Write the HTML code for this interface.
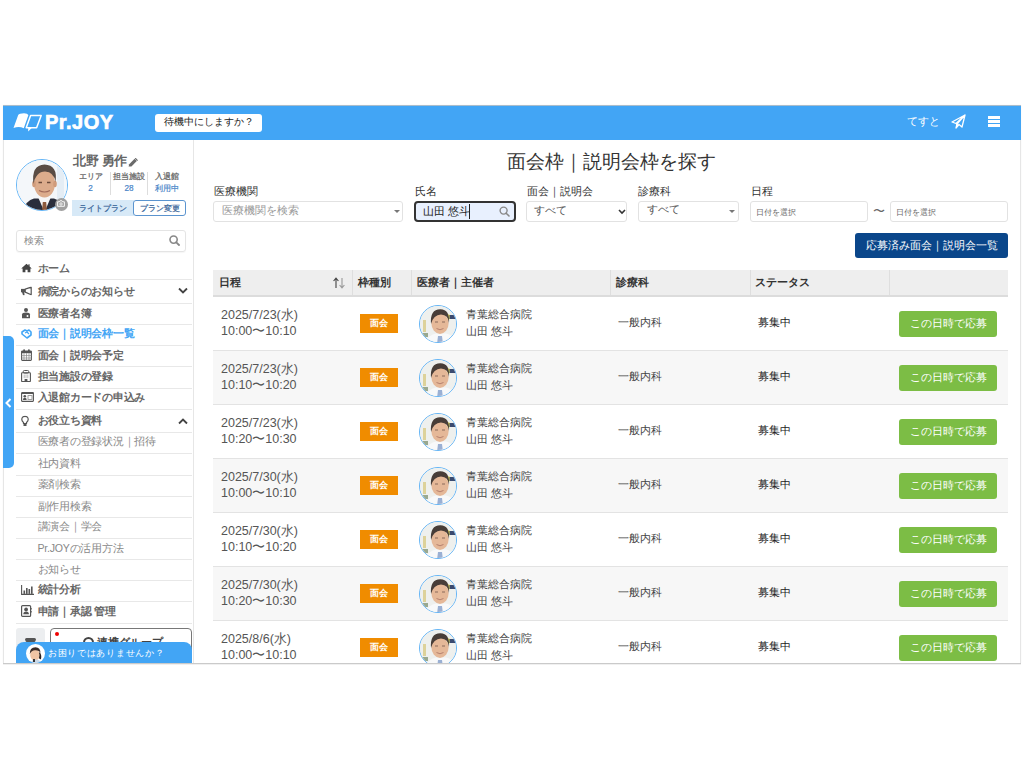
<!DOCTYPE html><html><head><meta charset="utf-8"><style>
*{box-sizing:border-box;margin:0;padding:0}
html,body{width:1024px;height:768px;background:#fff;overflow:hidden}
body{position:relative;font-family:"Liberation Sans",sans-serif;color:#333}
.a{position:absolute;white-space:nowrap}
#app{position:absolute;left:3px;top:105px;width:1018px;height:558px;background:#fff;border-left:1px solid #e6e6e6;border-right:1px solid #e6e6e6;box-shadow:0 0 1px rgba(0,0,0,.08)}
#hdr{position:absolute;left:3px;top:105px;width:1018px;height:35px;background:#42a5f5;border-top:1px solid #a9bccb}
.mi{position:absolute;left:16px;width:176px;border-bottom:1px solid #e8e8e8;font-size:10.6px;letter-spacing:-0.25px;font-weight:bold;color:#666}
.mi span{position:absolute;left:21.5px;line-height:14px;white-space:nowrap}
.mi svg{position:absolute;left:5px;top:50%;transform:translateY(-50%)}
.mi.sub{font-weight:normal;color:#888}

.lbl{position:absolute;font-size:10.5px;color:#333;top:185px;white-space:nowrap}
.inp{position:absolute;top:201px;height:21px;border:1px solid #e2e2e2;border-radius:3px;background:#fff}
.th{position:absolute;top:269px;height:26px;font-size:10.8px;font-weight:bold;color:#333;line-height:26px;white-space:nowrap}
.row{position:absolute;left:213px;width:795px;height:54px;border-bottom:1px solid #e3e3e3}
.row.alt{background:#f7f7f7}
.dt{position:absolute;left:8px;top:10.2px;font-size:12.5px;line-height:16.3px;color:#555;white-space:nowrap}
.badge{position:absolute;left:147px;top:17px;width:38px;height:19px;background:#f08c00;color:#fff;font-size:9px;font-weight:bold;text-align:center;line-height:19px}
.av{position:absolute;left:206px;top:8px;width:38px;height:38px;border-radius:50%;border:1px solid #64b5f6;overflow:hidden;background:#eef2f4}
.hosp{position:absolute;left:253px;top:9px;font-size:10.8px;line-height:16.5px;color:#444;white-space:nowrap}
.dept{position:absolute;left:405px;top:19px;font-size:10.8px;color:#444;white-space:nowrap}
.stat{position:absolute;left:545px;top:19px;font-size:10.8px;color:#222;white-space:nowrap}
.btn{position:absolute;left:686px;top:14px;width:98px;height:26px;border-radius:3px;background:#7cbd45;color:#fff;font-size:10.8px;text-align:center;line-height:24px;white-space:nowrap}
</style></head><body>
<div id="app"></div><div id="hdr"></div>
<svg class="a" style="left:10px;top:108px" width="36" height="30" viewBox="0 0 36 30">
<path d="M3.5 20 L8.2 7 Q9.2 5.2 14 5.2 Q17.6 5.4 18.4 7 L13.8 20.2 Q9 17.8 3.5 20 Z" fill="#fff"/>
<path d="M20.6 7.6 L31.2 7.6 L26.6 19.8 L16.2 19.8 Z" fill="none" stroke="#fff" stroke-width="1.5" stroke-linejoin="round"/>
<path d="M18.2 19.5 L18.2 23.5 L22.2 19.5 Z" fill="#fff"/>
</svg>
<div class="a" style="left:45px;top:110px;font-size:20px;font-weight:bold;color:#fff;line-height:24px;letter-spacing:0.5px;-webkit-text-stroke:0.7px #fff">Pr.JOY</div>
<div class="a" style="left:155px;top:114px;width:107px;height:18px;background:#fff;border-radius:3px;font-size:9.5px;line-height:16px;text-align:center;color:#222">待機中にしますか？</div>
<div class="a" style="left:907px;top:114px;font-size:10.8px;line-height:14px;color:#fff">てすと</div>
<svg class="a" style="left:951px;top:114px" width="15" height="15" viewBox="0 0 15 15">
<path d="M14 1 L1 8 L5 9.5 L14 1 L6 10 L5 14 L8 10.5 L11 13 Z" fill="none" stroke="#fff" stroke-width="1.3" stroke-linejoin="round"/>
<path d="M5 9.5 L5 14 L7.5 10.5 Z" fill="#fff"/></svg>
<div class="a" style="left:988px;top:116px;width:12px;height:2.5px;background:#fff"></div>
<div class="a" style="left:988px;top:120px;width:12px;height:2.5px;background:#fff"></div>
<div class="a" style="left:988px;top:124px;width:12px;height:2.5px;background:#fff"></div>
<div class="a" style="left:193px;top:140px;width:1px;height:523px;background:#e6e6e6"></div>
<div class="a" style="left:16px;top:159px;width:52px;height:52px;border-radius:50%;overflow:hidden;border:1px solid #64b5f6"><svg width="52" height="52" viewBox="0 0 52 52">
<rect width="52" height="52" fill="#f4f7fa"/>
<rect x="40" y="2" width="7" height="42" fill="#e4edf5"/>
<path d="M6 52 Q8 41 17 38.5 L37 38.5 Q45 41 48 52 Z" fill="#2a2e3c"/>
<path d="M21 37 L27.5 52 L34 37 Z" fill="#f6f6f6"/>
<path d="M25.8 42 L29.2 42 L30 52 L25 52 Z" fill="#8d5a3c"/>
<ellipse cx="27.5" cy="23.5" rx="10.5" ry="14" fill="#dcac8c"/>
<ellipse cx="17" cy="24" rx="1.8" ry="3.2" fill="#d09c7c"/>
<ellipse cx="38" cy="24" rx="1.8" ry="3.2" fill="#d09c7c"/>
<path d="M16.5 24 Q14 5 27.5 4.5 Q41 5 38.5 22 Q37 12 28 11.5 Q19 11.5 16.5 24 Z" fill="#5a4c44"/>
<path d="M21.5 22.5 H25 M30 22.5 H33.5" stroke="#6a4a3a" stroke-width="1.3"/>
<path d="M22 30.5 Q27.5 33.5 33 30.5" stroke="#a06a5a" stroke-width="1.1" fill="none"/>
</svg></div>
<div class="a" style="left:54.5px;top:197.5px;width:13px;height:13px;border-radius:50%;background:#a0a0a0"></div>
<svg class="a" style="left:57px;top:200px" width="8" height="7" viewBox="0 0 8 7"><path d="M0.6 1.8 H2.3 L3 0.8 H5 L5.7 1.8 H7.4 V6.3 H0.6 Z" fill="none" stroke="#fff" stroke-width="0.9"/><circle cx="4" cy="4" r="1.2" fill="none" stroke="#fff" stroke-width="0.8"/></svg>
<div class="a" style="left:73px;top:153px;font-size:12.6px;letter-spacing:-0.3px;font-weight:bold;color:#666;line-height:16px">北野 勇作</div>
<svg class="a" style="left:128px;top:157.5px" width="10" height="9" viewBox="0 0 10 9"><path d="M0.6 8.6 L1.2 6.2 L6.6 0.8 L8.8 3 L3.4 8.4 Z" fill="#6a6a6a"/><path d="M7.2 0.2 L9.6 2.6" stroke="#6a6a6a" stroke-width="1.2"/></svg>
<div class="a" style="left:60.5px;width:60px;top:171px;text-align:center;font-size:8px;line-height:11px;color:#666;-webkit-text-stroke:0.25px #666">エリア</div>
<div class="a" style="left:60.5px;width:60px;top:183px;text-align:center;font-size:8.2px;line-height:11px;color:#4a86c8;-webkit-text-stroke:0.2px #4a86c8">2</div>
<div class="a" style="left:99px;width:60px;top:171px;text-align:center;font-size:8px;line-height:11px;color:#666;-webkit-text-stroke:0.25px #666">担当施設</div>
<div class="a" style="left:99px;width:60px;top:183px;text-align:center;font-size:8.2px;line-height:11px;color:#4a86c8;-webkit-text-stroke:0.2px #4a86c8">28</div>
<div class="a" style="left:137px;width:60px;top:171px;text-align:center;font-size:8px;line-height:11px;color:#666;-webkit-text-stroke:0.25px #666">入退館</div>
<div class="a" style="left:137px;width:60px;top:183px;text-align:center;font-size:8.2px;line-height:11px;color:#4a86c8;-webkit-text-stroke:0.2px #4a86c8">利用中</div>
<div class="a" style="left:110px;top:172px;width:1px;height:23px;background:#ddd"></div>
<div class="a" style="left:147px;top:172px;width:1px;height:23px;background:#ddd"></div>
<div class="a" style="left:72px;top:200px;width:62px;height:16px;background:#d7e9f7;font-size:8.4px;line-height:16px;text-align:center;color:#3f6a9c;-webkit-text-stroke:0.25px #3f6a9c">ライトプラン</div>
<div class="a" style="left:133px;top:200px;width:53px;height:16px;border:1px solid #5b94cf;border-radius:3px;background:#fff;font-size:8.4px;line-height:14px;text-align:center;color:#3f6a9c;-webkit-text-stroke:0.25px #3f6a9c">プラン変更</div>
<div class="a" style="left:16px;top:230px;width:170px;height:22px;border:1px solid #e4e4e4;border-radius:3px;box-shadow:0 1px 1px rgba(0,0,0,.04)"></div>
<div class="a" style="left:24px;top:234px;font-size:10px;line-height:13px;color:#888">検索</div>
<svg class="a" style="left:169px;top:235px" width="11" height="11" viewBox="0 0 11 11"><circle cx="4.6" cy="4.6" r="3.6" fill="none" stroke="#888" stroke-width="1.6"/><path d="M7.3 7.3 L10 10" stroke="#888" stroke-width="1.8" stroke-linecap="round"/></svg>
<div class="mi" style="top:255px;height:25px"><svg style="top:13px" width="11" height="9" viewBox="0 0 11 9"><path d="M5.5 0.3 L0.2 5 L1.6 5 L1.6 9 L4.4 9 L4.4 6.2 L6.6 6.2 L6.6 9 L9.4 9 L9.4 5 L10.8 5 L8.6 3 L8.6 0.8 L7.4 0.8 L7.4 2 Z" fill="#444"/></svg><span style="top:5.7px">ホーム</span></div>
<div class="mi" style="top:279px;height:25px"><svg style="top:12px" width="11" height="9" viewBox="0 0 11 9"><rect x="0" y="2.4" width="4.2" height="3.4" fill="#555"/><path d="M4.2 2.6 L10.2 0.6 L10.2 8.2 L4.2 5.6 Z" fill="none" stroke="#555" stroke-width="1.2" stroke-linejoin="round"/><path d="M1 5.6 L2 8.8 L3.6 8.8 L3.2 5.6 Z" fill="#555"/></svg><span style="top:4.7px">病院からのお知らせ</span><svg style="left:161.5px;top:12px" width="10" height="7" viewBox="0 0 10 7"><path d="M1 1 L5 5 L9 1" fill="none" stroke="#444" stroke-width="1.8"/></svg></div>
<div class="mi" style="top:303px;height:22px"><svg style="top:9.9px" width="10" height="11" viewBox="0 0 10 11"><circle cx="5" cy="2.5" r="2" fill="#555"/><path d="M1 11 L1 7 Q1 5 5 5 Q9 5 9 7 L9 11 Z" fill="#555"/><circle cx="6.5" cy="8.5" r="1" fill="#fff"/></svg><span style="top:2.6px">医療者名簿</span></div>
<div class="mi" style="top:324px;height:22px"><svg style="top:9.6px" width="11" height="10" viewBox="0 0 11 10"><path d="M1 3 L4 1 L6 2 L8 1 L10 3 L10 6 L6 9 L1 5 Z" fill="none" stroke="#42a5f5" stroke-width="1.6" stroke-linejoin="round"/><path d="M4 4 L6 3 L8 5" fill="none" stroke="#42a5f5" stroke-width="1.2"/></svg><span style="color:#42a5f5;top:2.3px">面会｜説明会枠一覧</span></div>
<div class="mi" style="top:345px;height:22px"><svg style="top:10.15px" width="11" height="12" viewBox="0 0 11 12"><rect x="0.6" y="2" width="9.8" height="9.4" rx="0.8" fill="none" stroke="#555" stroke-width="1.1"/><rect x="0.6" y="2" width="9.8" height="2.2" fill="#555"/><rect x="2.2" y="0.2" width="1.8" height="2.8" rx="0.9" fill="#555"/><rect x="7" y="0.2" width="1.8" height="2.8" rx="0.9" fill="#555"/><path d="M3 4.2 V11 M5.5 4.2 V11 M8 4.2 V11 M0.6 6.6 H10.4 M0.6 9 H10.4" stroke="#888" stroke-width="0.7"/></svg><span style="top:2.85px">面会｜説明会予定</span></div>
<div class="mi" style="top:366px;height:23px"><svg style="top:9.8px" width="10" height="12" viewBox="0 0 10 12"><rect x="2.2" y="0.5" width="5.6" height="2.6" rx="1.2" fill="none" stroke="#555" stroke-width="1"/><rect x="0.6" y="2.8" width="8.8" height="8.7" rx="0.6" fill="none" stroke="#555" stroke-width="1.1"/><path d="M3.2 4.5 V8.2 M5 4.5 V8.2 M6.8 4.5 V8.2" stroke="#999" stroke-width="0.7"/><rect x="3.6" y="9" width="2.8" height="2.5" fill="#555"/></svg><span style="top:2.5px">担当施設の登録</span></div>
<div class="mi" style="top:388px;height:22px"><svg style="top:8.9px" width="13" height="10" viewBox="0 0 13 10"><rect x="0.6" y="0.6" width="11.8" height="8.8" rx="0.6" fill="none" stroke="#555" stroke-width="1.1"/><rect x="0.6" y="0.6" width="11.8" height="1.4" fill="#555"/><circle cx="3.8" cy="4.2" r="1.3" fill="#555"/><path d="M1.9 8 Q1.9 5.8 3.8 5.8 Q5.7 5.8 5.7 8 Z" fill="#555"/><rect x="7" y="3.6" width="4" height="3.8" fill="none" stroke="#888" stroke-width="0.8"/></svg><span style="top:1.6px">入退館カードの申込み</span></div>
<div class="mi" style="top:409px;height:24px"><svg style="top:11.6px" width="8" height="11" viewBox="0 0 8 11"><path d="M4 0.8 Q7.2 0.8 7.2 4 Q7.2 5.5 5.5 7 L5.5 8 L2.5 8 L2.5 7 Q0.8 5.5 0.8 4 Q0.8 0.8 4 0.8 Z" fill="none" stroke="#555" stroke-width="1.2"/><rect x="2.5" y="8.5" width="3" height="2" fill="#555"/></svg><span style="top:4.3px">お役立ち資料</span><svg style="left:161.5px;top:11.6px" width="10" height="7" viewBox="0 0 10 7"><path d="M1 6 L5 2 L9 6" fill="none" stroke="#444" stroke-width="1.8"/></svg></div>
<div class="mi sub" style="top:432px;height:22px"><span style="top:2.4px">医療者の登録状況｜招待</span></div>
<div class="mi sub" style="top:453px;height:23px"><span style="top:3.0px">社内資料</span></div>
<div class="mi sub" style="top:475px;height:22px"><span style="top:1.8px">薬剤検索</span></div>
<div class="mi sub" style="top:496px;height:22px"><span style="top:2.5px">副作用検索</span></div>
<div class="mi sub" style="top:517px;height:22px"><span style="top:2.0px">講演会｜学会</span></div>
<div class="mi sub" style="top:538px;height:22px"><span style="top:2.5px">Pr.JOYの活用方法</span></div>
<div class="mi sub" style="top:559px;height:22px"><span style="top:2.6px">お知らせ</span></div>
<div class="mi" style="top:580px;height:22px"><svg style="top:9.75px" width="13" height="10" viewBox="0 0 13 10"><path d="M0.6 0 V9.4 H13" fill="none" stroke="#555" stroke-width="1.1"/><rect x="2.5" y="5.5" width="1.6" height="3.4" fill="#555"/><rect x="5" y="3" width="1.6" height="5.9" fill="#555"/><rect x="7.5" y="4" width="1.6" height="4.9" fill="#555"/><rect x="10" y="1.5" width="1.6" height="7.4" fill="#555"/></svg><span style="top:2.45px">統計分析</span></div>
<div class="mi" style="top:601px;height:23px"><svg style="top:10.1px" width="11" height="12" viewBox="0 0 11 12"><rect x="0.6" y="0.6" width="9" height="10.8" rx="1" fill="none" stroke="#555" stroke-width="1.2"/><path d="M10.2 3 V4.5 M10.2 6 V7.5" stroke="#555" stroke-width="1"/><circle cx="5.1" cy="4.4" r="1.9" fill="#555"/><path d="M2.3 9.2 Q2.3 6.6 5.1 6.6 Q7.9 6.6 7.9 9.2 Z" fill="#555"/></svg><span style="top:2.8px">申請｜承認 管理</span></div>
<div class="a" style="left:3px;top:336px;width:11px;height:132px;background:#42a5f5;border-radius:0 5px 5px 0"></div>
<svg class="a" style="left:5px;top:398px" width="7" height="10" viewBox="0 0 7 10"><path d="M5.5 1 L1.5 5 L5.5 9" fill="none" stroke="#fff" stroke-width="2"/></svg>
<div class="a" style="left:16px;top:628px;width:29px;height:40px;background:#eceef0;border-radius:3px"></div>
<svg class="a" style="left:25px;top:637.5px" width="11" height="5" viewBox="0 0 11 5"><path d="M1.5 0 H9.5 Q11 0 11 1.5 Q11 3 8.5 5 H2.5 Q0 3 0 1.5 Q0 0 1.5 0 Z" fill="#555"/></svg>
<div class="a" style="left:50px;top:628px;width:142px;height:40px;border:1px solid #777;border-radius:4px;background:#fff"></div>
<div class="a" style="left:55px;top:632px;width:4px;height:4px;border-radius:50%;background:#e00"></div>
<div class="a" style="left:83px;top:637px;width:11px;height:11px;border-radius:50%;border:2.5px solid #444"></div>
<div class="a" style="left:97px;top:634px;font-size:11px;font-weight:bold;color:#444;line-height:16px">連携グループ</div>
<div class="a" style="left:16px;top:642px;width:176px;height:21px;background:#42a5f5;border-radius:8px 8px 0 0"></div>
<div class="a" style="left:26px;top:644px;width:19px;height:19px;border-radius:50%;background:#fff;overflow:hidden"><svg width="19" height="19" viewBox="0 0 19 19"><ellipse cx="9" cy="11" rx="4.8" ry="5.8" fill="#efc4a4"/><path d="M3.8 10 Q3.5 3.5 9.5 3.2 Q14.5 3.5 14.5 9 Q13 6 9 6.2 Q5.5 6.5 3.8 10 Z" fill="#3a2c28"/><path d="M13.5 8 Q16 11 15 15 Q14 16 13 14 Q14 11 13 9 Z" fill="#2a201e"/><path d="M4 19 Q6 15.5 10 15.5 Q14 15.5 15.5 19 Z" fill="#c8d8e8"/><rect x="7" y="15" width="2" height="3" fill="#333"/></svg></div>
<div class="a" style="left:48px;top:646px;font-size:9.4px;letter-spacing:0.7px;line-height:13px;color:#fff">お困りではありませんか？</div>
<div class="a" style="left:507px;top:151px;font-size:18.8px;line-height:22px;color:#333">面会枠｜説明会枠を探す</div>
<div class="lbl" style="left:214px">医療機関</div>
<div class="lbl" style="left:415px">氏名</div>
<div class="lbl" style="left:527px">面会｜説明会</div>
<div class="lbl" style="left:638px">診療科</div>
<div class="lbl" style="left:751px">日程</div>
<div class="inp" style="left:213px;width:190px"></div>
<div class="a" style="left:222px;top:204px;font-size:10.8px;line-height:13px;color:#999">医療機関を検索</div>
<div class="a" style="left:394px;top:210px;width:0;height:0;border-left:3px solid transparent;border-right:3px solid transparent;border-top:3px solid #777"></div>
<div class="a" style="left:414px;top:201px;width:102px;height:21px;border:2px solid #333;border-radius:4px;background:#e8f0fe"></div>
<div class="a" style="left:423px;top:205px;font-size:10.8px;line-height:13px;color:#222">山田 悠斗</div>
<div class="a" style="left:469px;top:204px;width:1px;height:15px;background:#222"></div>
<svg class="a" style="left:499px;top:206px" width="11" height="11" viewBox="0 0 11 11"><circle cx="4.6" cy="4.6" r="3.5" fill="none" stroke="#888" stroke-width="1.4"/><path d="M7.2 7.2 L10 10" stroke="#888" stroke-width="1.6" stroke-linecap="round"/></svg>
<div class="inp" style="left:526px;width:101px"></div>
<div class="a" style="left:534px;top:203px;font-size:11px;line-height:14px;color:#555">すべて</div>
<svg class="a" style="left:618px;top:209px" width="8" height="6" viewBox="0 0 8 6"><path d="M1 1 L4 4 L7 1" fill="none" stroke="#333" stroke-width="1.6"/></svg>
<div class="inp" style="left:638px;width:101px"></div>
<div class="a" style="left:647px;top:202px;font-size:11px;line-height:14px;color:#555">すべて</div>
<div class="a" style="left:729px;top:210px;width:0;height:0;border-left:3px solid transparent;border-right:3px solid transparent;border-top:3px solid #777"></div>
<div class="inp" style="left:750px;width:118px"></div>
<div class="a" style="left:756px;top:208px;font-size:7.8px;line-height:10px;color:#666">日付を選択</div>
<div class="a" style="left:873px;top:204px;font-size:12px;line-height:14px;color:#666">〜</div>
<div class="inp" style="left:890px;width:118px"></div>
<div class="a" style="left:896px;top:208px;font-size:7.8px;line-height:10px;color:#666">日付を選択</div>
<div class="a" style="left:855px;top:233px;width:153px;height:25px;background:#0a468a;border-radius:3px;color:#fff;font-size:10.8px;line-height:25px;text-align:center">応募済み面会｜説明会一覧</div>
<div class="a" style="left:213px;top:270px;width:795px;height:27px;background:#eeeeee;border-bottom:2px solid #dcdcdc"></div>
<div class="a" style="left:352px;top:270px;width:1px;height:25px;background:#dedede"></div>
<div class="a" style="left:411px;top:270px;width:1px;height:25px;background:#dedede"></div>
<div class="a" style="left:610px;top:270px;width:1px;height:25px;background:#dedede"></div>
<div class="a" style="left:750px;top:270px;width:1px;height:25px;background:#dedede"></div>
<div class="a" style="left:889px;top:270px;width:1px;height:25px;background:#dedede"></div>
<div class="th" style="left:219px">日程</div>
<svg class="a" style="left:333px;top:277px" width="12" height="12" viewBox="0 0 12 12"><path d="M3 11 V1.5 M0.6 4 L3 1.2 L5.4 4" fill="none" stroke="#444" stroke-width="1.1"/><path d="M9 1 V10.5 M6.6 8 L9 10.8 L11.4 8" fill="none" stroke="#999" stroke-width="1.1"/></svg>
<div class="th" style="left:358px">枠種別</div>
<div class="th" style="left:417px">医療者｜主催者</div>
<div class="th" style="left:616px">診療科</div>
<div class="th" style="left:755px;font-size:11px">ステータス</div>
<div class="row" style="top:297px"><div class="dt">2025/7/23(水)<br>10:00〜10:10</div><div class="badge">面会</div><div class="av"><svg width="38" height="38" viewBox="0 0 38 38">
<rect width="38" height="38" fill="#eef0ee"/>
<rect x="3" y="14" width="3" height="12" fill="#ddd29a"/>
<rect x="2" y="27" width="6" height="4" fill="#98a890"/>
<rect x="29" y="9" width="7" height="4" fill="#3a4a70"/>
<rect x="27.5" y="8.5" width="2" height="5" fill="#e2dd52"/>
<path d="M5 38 Q8 29 16 27.5 L26 27.5 Q34 29 37 38 Z" fill="#f8f9fa"/>
<ellipse cx="20" cy="17.5" rx="8.6" ry="10.4" fill="#e5b898"/>
<path d="M11 18 Q9.8 3 20.5 3.2 Q30 3.5 29 17 Q28.5 9 21 8.6 Q13.5 8.8 11 18 Z" fill="#473d38"/>
<path d="M15 16 H18 M22 16 H25" stroke="#8a6a5a" stroke-width="1"/>
<path d="M16.5 22.5 Q20 25 23.5 22.5" stroke="#b07a6a" stroke-width="0.9" fill="none"/>
<path d="M18 30 L22 30 L23 38 L17 38 Z" fill="#9ab0d4"/>
</svg></div><div class="hosp">青葉総合病院<br>山田 悠斗</div><div class="dept">一般内科</div><div class="stat">募集中</div><div class="btn">この日時で応募</div></div>
<div class="row alt" style="top:351px"><div class="dt">2025/7/23(水)<br>10:10〜10:20</div><div class="badge">面会</div><div class="av"><svg width="38" height="38" viewBox="0 0 38 38">
<rect width="38" height="38" fill="#eef0ee"/>
<rect x="3" y="14" width="3" height="12" fill="#ddd29a"/>
<rect x="2" y="27" width="6" height="4" fill="#98a890"/>
<rect x="29" y="9" width="7" height="4" fill="#3a4a70"/>
<rect x="27.5" y="8.5" width="2" height="5" fill="#e2dd52"/>
<path d="M5 38 Q8 29 16 27.5 L26 27.5 Q34 29 37 38 Z" fill="#f8f9fa"/>
<ellipse cx="20" cy="17.5" rx="8.6" ry="10.4" fill="#e5b898"/>
<path d="M11 18 Q9.8 3 20.5 3.2 Q30 3.5 29 17 Q28.5 9 21 8.6 Q13.5 8.8 11 18 Z" fill="#473d38"/>
<path d="M15 16 H18 M22 16 H25" stroke="#8a6a5a" stroke-width="1"/>
<path d="M16.5 22.5 Q20 25 23.5 22.5" stroke="#b07a6a" stroke-width="0.9" fill="none"/>
<path d="M18 30 L22 30 L23 38 L17 38 Z" fill="#9ab0d4"/>
</svg></div><div class="hosp">青葉総合病院<br>山田 悠斗</div><div class="dept">一般内科</div><div class="stat">募集中</div><div class="btn">この日時で応募</div></div>
<div class="row" style="top:405px"><div class="dt">2025/7/23(水)<br>10:20〜10:30</div><div class="badge">面会</div><div class="av"><svg width="38" height="38" viewBox="0 0 38 38">
<rect width="38" height="38" fill="#eef0ee"/>
<rect x="3" y="14" width="3" height="12" fill="#ddd29a"/>
<rect x="2" y="27" width="6" height="4" fill="#98a890"/>
<rect x="29" y="9" width="7" height="4" fill="#3a4a70"/>
<rect x="27.5" y="8.5" width="2" height="5" fill="#e2dd52"/>
<path d="M5 38 Q8 29 16 27.5 L26 27.5 Q34 29 37 38 Z" fill="#f8f9fa"/>
<ellipse cx="20" cy="17.5" rx="8.6" ry="10.4" fill="#e5b898"/>
<path d="M11 18 Q9.8 3 20.5 3.2 Q30 3.5 29 17 Q28.5 9 21 8.6 Q13.5 8.8 11 18 Z" fill="#473d38"/>
<path d="M15 16 H18 M22 16 H25" stroke="#8a6a5a" stroke-width="1"/>
<path d="M16.5 22.5 Q20 25 23.5 22.5" stroke="#b07a6a" stroke-width="0.9" fill="none"/>
<path d="M18 30 L22 30 L23 38 L17 38 Z" fill="#9ab0d4"/>
</svg></div><div class="hosp">青葉総合病院<br>山田 悠斗</div><div class="dept">一般内科</div><div class="stat">募集中</div><div class="btn">この日時で応募</div></div>
<div class="row alt" style="top:459px"><div class="dt">2025/7/30(水)<br>10:00〜10:10</div><div class="badge">面会</div><div class="av"><svg width="38" height="38" viewBox="0 0 38 38">
<rect width="38" height="38" fill="#eef0ee"/>
<rect x="3" y="14" width="3" height="12" fill="#ddd29a"/>
<rect x="2" y="27" width="6" height="4" fill="#98a890"/>
<rect x="29" y="9" width="7" height="4" fill="#3a4a70"/>
<rect x="27.5" y="8.5" width="2" height="5" fill="#e2dd52"/>
<path d="M5 38 Q8 29 16 27.5 L26 27.5 Q34 29 37 38 Z" fill="#f8f9fa"/>
<ellipse cx="20" cy="17.5" rx="8.6" ry="10.4" fill="#e5b898"/>
<path d="M11 18 Q9.8 3 20.5 3.2 Q30 3.5 29 17 Q28.5 9 21 8.6 Q13.5 8.8 11 18 Z" fill="#473d38"/>
<path d="M15 16 H18 M22 16 H25" stroke="#8a6a5a" stroke-width="1"/>
<path d="M16.5 22.5 Q20 25 23.5 22.5" stroke="#b07a6a" stroke-width="0.9" fill="none"/>
<path d="M18 30 L22 30 L23 38 L17 38 Z" fill="#9ab0d4"/>
</svg></div><div class="hosp">青葉総合病院<br>山田 悠斗</div><div class="dept">一般内科</div><div class="stat">募集中</div><div class="btn">この日時で応募</div></div>
<div class="row" style="top:513px"><div class="dt">2025/7/30(水)<br>10:10〜10:20</div><div class="badge">面会</div><div class="av"><svg width="38" height="38" viewBox="0 0 38 38">
<rect width="38" height="38" fill="#eef0ee"/>
<rect x="3" y="14" width="3" height="12" fill="#ddd29a"/>
<rect x="2" y="27" width="6" height="4" fill="#98a890"/>
<rect x="29" y="9" width="7" height="4" fill="#3a4a70"/>
<rect x="27.5" y="8.5" width="2" height="5" fill="#e2dd52"/>
<path d="M5 38 Q8 29 16 27.5 L26 27.5 Q34 29 37 38 Z" fill="#f8f9fa"/>
<ellipse cx="20" cy="17.5" rx="8.6" ry="10.4" fill="#e5b898"/>
<path d="M11 18 Q9.8 3 20.5 3.2 Q30 3.5 29 17 Q28.5 9 21 8.6 Q13.5 8.8 11 18 Z" fill="#473d38"/>
<path d="M15 16 H18 M22 16 H25" stroke="#8a6a5a" stroke-width="1"/>
<path d="M16.5 22.5 Q20 25 23.5 22.5" stroke="#b07a6a" stroke-width="0.9" fill="none"/>
<path d="M18 30 L22 30 L23 38 L17 38 Z" fill="#9ab0d4"/>
</svg></div><div class="hosp">青葉総合病院<br>山田 悠斗</div><div class="dept">一般内科</div><div class="stat">募集中</div><div class="btn">この日時で応募</div></div>
<div class="row alt" style="top:567px"><div class="dt">2025/7/30(水)<br>10:20〜10:30</div><div class="badge">面会</div><div class="av"><svg width="38" height="38" viewBox="0 0 38 38">
<rect width="38" height="38" fill="#eef0ee"/>
<rect x="3" y="14" width="3" height="12" fill="#ddd29a"/>
<rect x="2" y="27" width="6" height="4" fill="#98a890"/>
<rect x="29" y="9" width="7" height="4" fill="#3a4a70"/>
<rect x="27.5" y="8.5" width="2" height="5" fill="#e2dd52"/>
<path d="M5 38 Q8 29 16 27.5 L26 27.5 Q34 29 37 38 Z" fill="#f8f9fa"/>
<ellipse cx="20" cy="17.5" rx="8.6" ry="10.4" fill="#e5b898"/>
<path d="M11 18 Q9.8 3 20.5 3.2 Q30 3.5 29 17 Q28.5 9 21 8.6 Q13.5 8.8 11 18 Z" fill="#473d38"/>
<path d="M15 16 H18 M22 16 H25" stroke="#8a6a5a" stroke-width="1"/>
<path d="M16.5 22.5 Q20 25 23.5 22.5" stroke="#b07a6a" stroke-width="0.9" fill="none"/>
<path d="M18 30 L22 30 L23 38 L17 38 Z" fill="#9ab0d4"/>
</svg></div><div class="hosp">青葉総合病院<br>山田 悠斗</div><div class="dept">一般内科</div><div class="stat">募集中</div><div class="btn">この日時で応募</div></div>
<div class="row" style="top:621px"><div class="dt">2025/8/6(水)<br>10:00〜10:10</div><div class="badge">面会</div><div class="av"><svg width="38" height="38" viewBox="0 0 38 38">
<rect width="38" height="38" fill="#eef0ee"/>
<rect x="3" y="14" width="3" height="12" fill="#ddd29a"/>
<rect x="2" y="27" width="6" height="4" fill="#98a890"/>
<rect x="29" y="9" width="7" height="4" fill="#3a4a70"/>
<rect x="27.5" y="8.5" width="2" height="5" fill="#e2dd52"/>
<path d="M5 38 Q8 29 16 27.5 L26 27.5 Q34 29 37 38 Z" fill="#f8f9fa"/>
<ellipse cx="20" cy="17.5" rx="8.6" ry="10.4" fill="#e5b898"/>
<path d="M11 18 Q9.8 3 20.5 3.2 Q30 3.5 29 17 Q28.5 9 21 8.6 Q13.5 8.8 11 18 Z" fill="#473d38"/>
<path d="M15 16 H18 M22 16 H25" stroke="#8a6a5a" stroke-width="1"/>
<path d="M16.5 22.5 Q20 25 23.5 22.5" stroke="#b07a6a" stroke-width="0.9" fill="none"/>
<path d="M18 30 L22 30 L23 38 L17 38 Z" fill="#9ab0d4"/>
</svg></div><div class="hosp">青葉総合病院<br>山田 悠斗</div><div class="dept">一般内科</div><div class="stat">募集中</div><div class="btn">この日時で応募</div></div>
<div class="a" style="left:0;top:663px;width:1024px;height:105px;background:#fff"></div>
<div class="a" style="left:3px;top:663px;width:1018px;height:1px;background:#cacaca"></div>
<div class="a" style="left:3px;top:664px;width:1018px;height:1px;background:#f0f0f0"></div>
</body></html>
